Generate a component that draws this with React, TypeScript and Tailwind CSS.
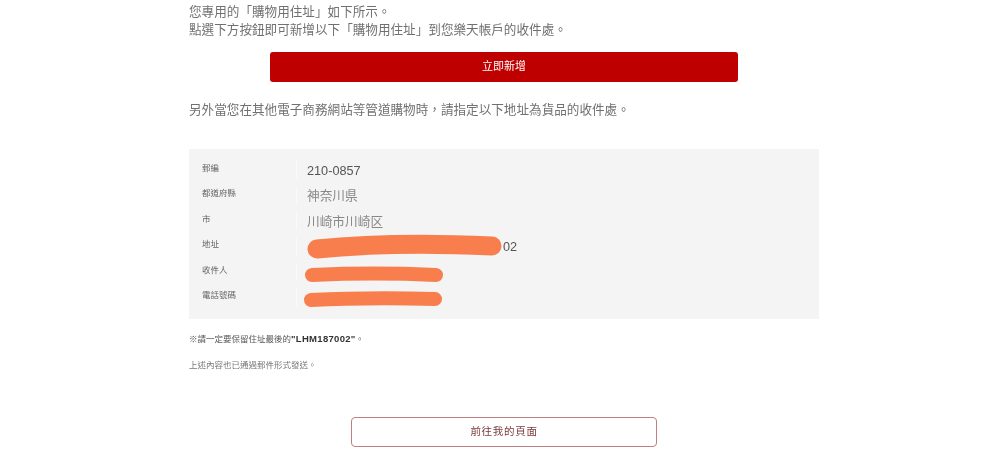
function Scribble({
  width,
  height,
  d,
  stroke,
  className,
}: {
  width: number
  height: number
  d: string
  stroke: number
  className: string
}) {
  return (
    <svg
      width={width}
      height={height}
      viewBox={`0 0 ${width} ${height}`}
      fill="none"
      className={className}
    >
      <path d={d} stroke="#f87f4d" strokeWidth={stroke} strokeLinecap="round" strokeLinejoin="round" />
    </svg>
  )
}

const rows = [
  { label: "郵編", value: "210-0857", dark: true },
  { label: "都道府縣", value: "神奈川県" },
  { label: "市", value: "川崎市川崎区" },
  { label: "地址", value: "02", dark: true, pad: true, scribble: "addr" },
  { label: "收件人", value: "", scribble: "name" },
  { label: "電話號碼", value: "", scribble: "tel" },
]

function App() {
  return (
    <div
      lang="zh-TW"
      className="h-[458px] w-[1000px] overflow-hidden bg-white blur-[0.35px] [font-family:'Liberation_Sans','Noto_Sans_CJK_TC',sans-serif]"
    >
      <div className="ml-[189px] flex w-[630px] flex-col">
        <div className="pt-[2px] text-[12.6px] leading-[18px] text-[#707070] [font-family:'Noto_Sans_CJK_TC',sans-serif]">
          <p>您專用的「購物用住址」如下所示。</p>
          <p>點選下方按鈕即可新增以下「購物用住址」到您樂天帳戶的收件處。</p>
        </div>

        <button className="mx-auto mt-[14px] flex h-[30px] w-[468px] items-center justify-center rounded-[3px] bg-[#bf0000] pb-[2px] text-[11px] text-white">
          立即新增
        </button>

        <p className="mt-[18px] text-[12.6px] leading-[18px] text-[#707070] [font-family:'Noto_Sans_CJK_TC',sans-serif]">
          另外當您在其他電子商務網站等管道購物時，請指定以下地址為貨品的收件處。
        </p>

        <div className="mt-[31px] flex h-[170px] flex-col justify-center bg-[#f4f4f4]">
          {rows.map((row) => (
            <div key={row.label} className="flex h-[25.5px] items-center">
              <div className="relative -top-[2px] w-[107px] pl-[13px] text-[8.5px] text-[#666]">
                {row.label}
              </div>
              <div
                className={`relative flex h-[18px] flex-1 items-center border-l border-[#fafafa] pt-[2px] text-[12.7px] ${
                  row.dark ? "text-[#555]" : "text-[#888]"
                } ${row.pad ? "pl-[206px]" : "pl-[10px]"}`}
              >
                {row.value}
                {row.scribble === "addr" && (
                  <Scribble
                    width={200}
                    height={30}
                    stroke={19}
                    d="M11 16 C 60 11, 120 10, 186 13"
                    className="absolute left-[9px] top-[-5px]"
                  />
                )}
                {row.scribble === "name" && (
                  <Scribble
                    width={142}
                    height={24}
                    stroke={14}
                    d="M8 15 C 50 13, 90 13, 132 15"
                    className="absolute left-[7px] top-[-3px]"
                  />
                )}
                {row.scribble === "tel" && (
                  <Scribble
                    width={142}
                    height={24}
                    stroke={14}
                    d="M8 14 C 50 12, 90 12, 132 13"
                    className="absolute left-[6px] top-[-3px]"
                  />
                )}
              </div>
            </div>
          ))}
        </div>

        <p className="mt-[14px] text-[8.5px] leading-[12px] text-[#555]">
          ※請一定要保留住址最後的
          <span className="text-[9.5px] font-bold tracking-[0.3px] text-[#333]">"LHM187002"</span>。
        </p>
        <p className="mt-[14px] text-[8.5px] leading-[12px] text-[#777]">上述內容也已通過郵件形式發送。</p>

        <button className="mx-auto mt-[46px] flex h-[30px] w-[306px] items-center justify-center rounded-[4px] border border-[#bf8080] bg-white text-[10.5px] tracking-[0.7px] text-[#7a3b3b]">
          前往我的頁面
        </button>
      </div>
    </div>
  )
}

export default App
